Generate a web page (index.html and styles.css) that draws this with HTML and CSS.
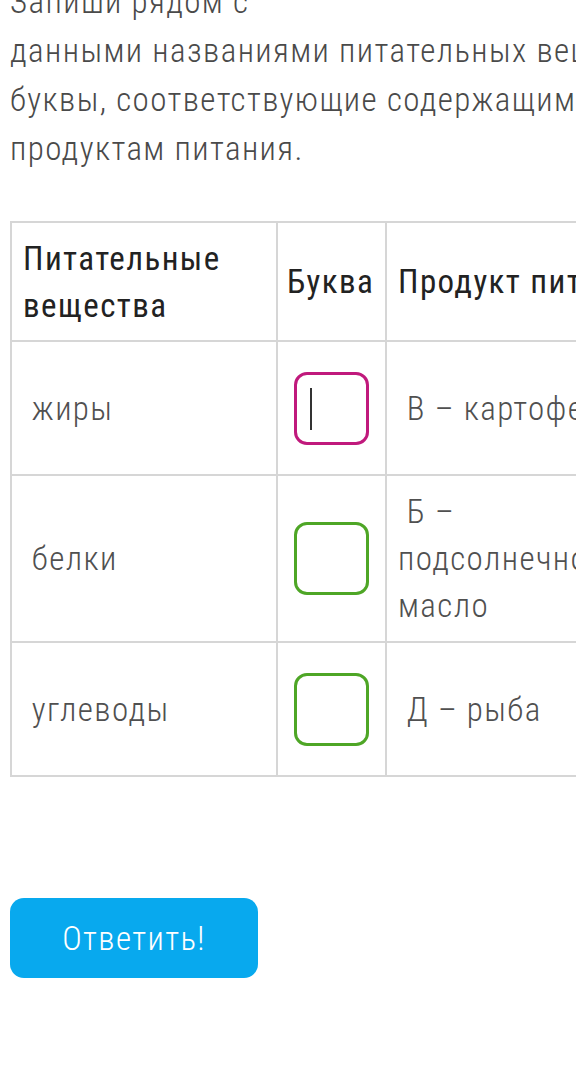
FILE: index.html
```html
<!DOCTYPE html>
<html lang="ru">
<head>
<meta charset="utf-8">
<link rel="stylesheet" href="styles.css">
</head>
<body>
<div class="page">
  <p class="task">Запиши рядом с<br>данными названиями питательных веществ<br>буквы, соответствующие содержащим их<br>продуктам питания.</p>
  <table class="grid">
    <colgroup>
      <col class="c1"><col class="c2"><col class="c3">
    </colgroup>
    <thead>
      <tr>
        <th>Питательные вещества</th>
        <th>Буква</th>
        <th class="nowrap">Продукт питания</th>
      </tr>
    </thead>
    <tbody>
      <tr>
        <td>&nbsp;жиры</td>
        <td class="mid"><div class="box box-active"><span class="caret"></span></div></td>
        <td class="nowrap">&nbsp;В – картофель</td>
      </tr>
      <tr>
        <td>&nbsp;белки</td>
        <td class="mid"><div class="box"></div></td>
        <td>&nbsp;Б – подсолнечное масло</td>
      </tr>
      <tr>
        <td>&nbsp;углеводы</td>
        <td class="mid"><div class="box"></div></td>
        <td>&nbsp;Д – рыба</td>
      </tr>
    </tbody>
  </table>
  <button class="answer" type="button">Ответить!</button>
</div>
</body>
</html>
```
FILE: styles.css
```css
html, body {
  margin: 0;
  padding: 0;
  background: #fff;
  overflow: hidden;
}
.page {
  width: 576px;
  height: 1070px;
  overflow: hidden;
  padding: 0 0 0 10px;
  box-sizing: border-box;
  font-family: Roboto, "Noto Sans", sans-serif;
  font-stretch: 75%;
  letter-spacing: 1.4px;
}
.task {
  margin: -23px 0 48px 0;
  width: 800px;
  white-space: nowrap;
  font-size: 33px;
  line-height: 49px;
  font-weight: 300;
  color: #4a4a4a;
}
.grid {
  border-collapse: collapse;
  table-layout: fixed;
  width: 620px;
}
.c1 { width: 266px; }
.c2 { width: 109px; }
.c3 { width: 245px; }
.grid th, .grid td {
  border: 2px solid #d6d6d6;
  padding: 0 11px;
  vertical-align: middle;
  text-align: left;
  font-size: 33px;
  line-height: 47px;
}
.grid th {
  height: 117px;
  font-weight: 400;
  color: #222;
}
.grid th:nth-child(2) { padding: 0 9px; }
.grid .nowrap { white-space: nowrap; }
.grid td {
  font-weight: 300;
  color: #505050;
  height: 132px;
}
.grid tbody tr:nth-child(2) td { height: 165px; }
.grid td.mid { padding: 0; }
.box {
  width: 69px;
  height: 67px;
  margin: 0 auto;
  border: 3px solid #4ea626;
  border-radius: 13px;
  position: relative;
}
.box-active { border-color: #c0197c; }
.caret {
  position: absolute;
  left: 13px;
  top: 13px;
  width: 2px;
  height: 42px;
  background: #333;
}
.answer {
  margin-top: 121px;
  width: 248px;
  height: 80px;
  border: none;
  border-radius: 14px;
  background: #08a9ee;
  color: #fff;
  font-family: Roboto, "Noto Sans", sans-serif;
  font-stretch: 75%;
  letter-spacing: 1.4px;
  font-weight: 300;
  font-size: 33px;
  padding: 0;
  display: block;
}
```
